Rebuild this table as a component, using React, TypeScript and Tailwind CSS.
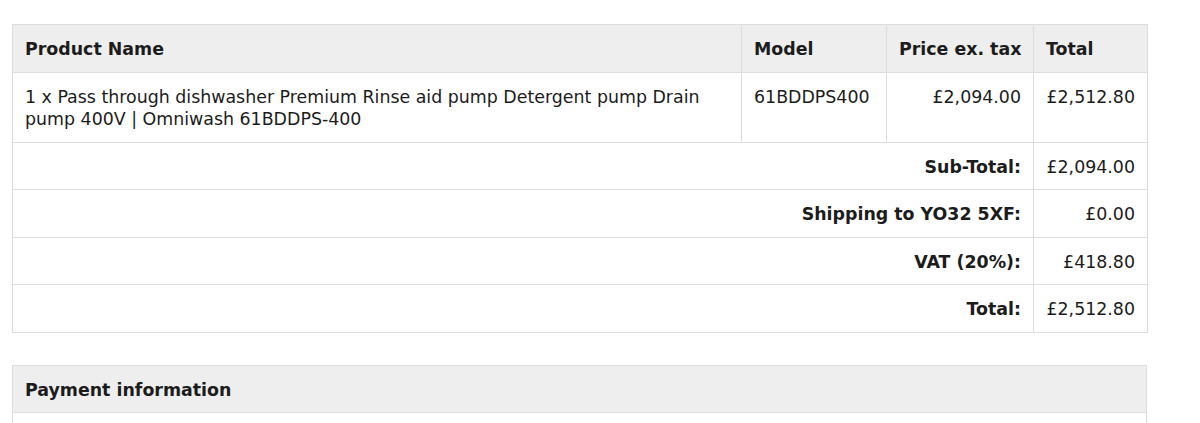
export default function App() {
  const font = { fontFamily: '"DejaVu Sans", Verdana, sans-serif' };
  const td = "border border-[#dddddd] px-3 pt-[13px] pb-[11px] align-top leading-[22.5px] whitespace-nowrap";
  const tdWrap = "border border-[#dddddd] px-3 pt-[13px] pb-[11px] align-top leading-[22.5px]";
  return (
    <div className="bg-white min-h-[423px] pt-6 pl-3 text-[17.4px] text-[#1c1c1c]" style={font}>
      <table className="border-collapse w-[1135px] table-fixed">
        <colgroup>
          <col className="w-[729px]" />
          <col className="w-[145px]" />
          <col className="w-[147px]" />
          <col className="w-[114px]" />
        </colgroup>
        <thead>
          <tr className="bg-[#eeeeee]">
            <th className={`${td} text-left font-bold`}>Product Name</th>
            <th className={`${td} text-left font-bold`}>Model</th>
            <th className={`${td} text-right font-bold`}>Price ex. tax</th>
            <th className={`${td} text-left font-bold`}>Total</th>
          </tr>
        </thead>
        <tbody>
          <tr>
            <td className={`${tdWrap} text-left`}>
              1 x Pass through dishwasher Premium Rinse aid pump Detergent pump Drain pump 400V | Omniwash 61BDDPS-400
            </td>
            <td className={`${td} text-left`}>61BDDPS400</td>
            <td className={`${td} text-right`}>£2,094.00</td>
            <td className={`${td} text-right`}>£2,512.80</td>
          </tr>
          {[
            ["Sub-Total:", "£2,094.00"],
            ["Shipping to YO32 5XF:", "£0.00"],
            ["VAT (20%):", "£418.80"],
            ["Total:", "£2,512.80"],
          ].map(([l, v]) => (
            <tr key={l}>
              <td colSpan={3} className={`${td} text-right font-bold`}>{l}</td>
              <td className={`${td} text-right`}>{v}</td>
            </tr>
          ))}
        </tbody>
      </table>
      <table className="border-collapse w-[1135px] mt-8">
        <thead>
          <tr className="bg-[#eeeeee]">
            <th className={`${td} text-left font-bold`}>Payment information</th>
          </tr>
        </thead>
        <tbody>
          <tr>
            <td className={`${td} text-left`}>&nbsp;</td>
          </tr>
        </tbody>
      </table>
    </div>
  );
}
